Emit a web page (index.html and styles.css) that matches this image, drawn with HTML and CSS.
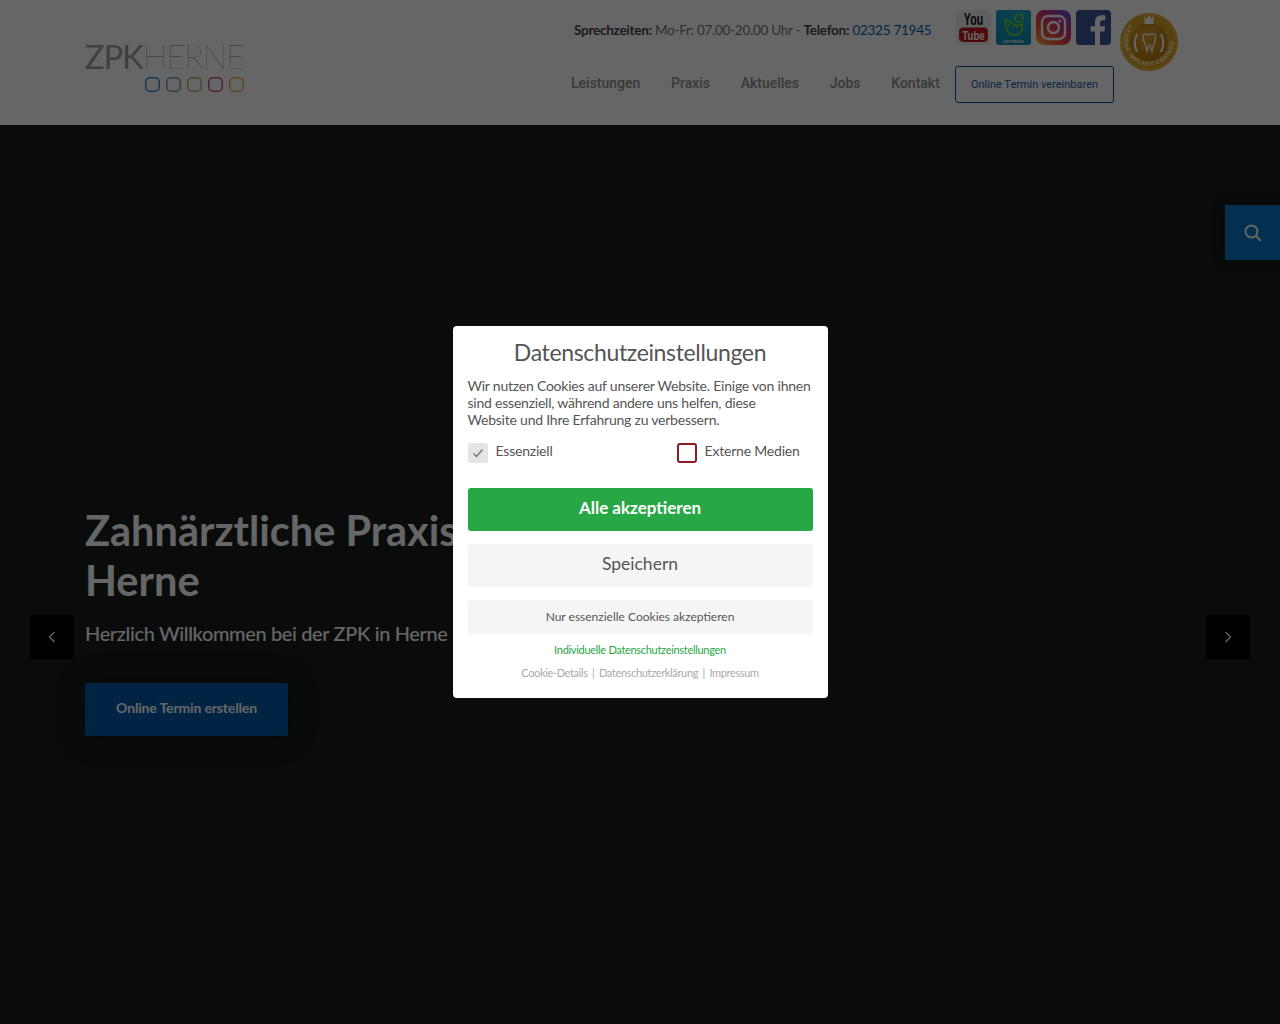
FILE: index.html
```html
<!DOCTYPE html>
<html lang="de">
<head>
<meta charset="utf-8">
<title>ZPK Herne</title>
<link rel="stylesheet" href="styles.css">
</head>
<body>
<header class="site-header">
  <a class="logo">
    <span class="logo-word"><span class="logo-zpk">ZPK</span><span class="logo-herne">HERNE</span></span>
    <span class="logo-dots">
      <i class="dot dot-blue"></i><i class="dot dot-slate"></i><i class="dot dot-olive"></i><i class="dot dot-plum"></i><i class="dot dot-amber"></i>
    </span>
  </a>
  <div class="header-main">
    <div class="header-top">
      <p class="hours"><b>Sprechzeiten:</b> Mo-Fr: 07.00-20.00 Uhr - <b>Telefon:</b> <a class="phone">02325 71945</a></p>
      <div class="socials">
        <svg class="icon" viewBox="0 0 34 34"><rect width="34" height="34" rx="5" fill="#f0f0f0"/><text transform="translate(17 15) scale(.65 1)" class="yt-you">You</text><rect x="3" y="17" width="28" height="14" rx="4" fill="#c4161c"/><text transform="translate(17 29) scale(.72 1)" class="yt-tube">Tube</text></svg>
        <svg class="icon" viewBox="0 0 35 35"><defs><linearGradient id="jam" x1="0" y1="0" x2="0" y2="1"><stop offset="0" stop-color="#17a5c4"/><stop offset="1" stop-color="#0f8bb0"/></linearGradient></defs><rect width="35" height="35" rx="3" fill="url(#jam)"/><path d="M9 10c1 9 2 15 9 15s9-5 8-11c-3 2-6 2-9 0-2-2-5-3-8-4z" fill="none" stroke="#7ed321" stroke-width="1.6"/><circle cx="23" cy="8" r="4" fill="none" stroke="#7ed321" stroke-width="1.6"/><circle cx="13" cy="15" r="1" fill="#7ed321"/><circle cx="21" cy="17" r="1" fill="#7ed321"/><text x="17.5" y="32.500" class="jam-text">jameda</text></svg>
        <svg class="icon" viewBox="0 0 35 35"><defs><linearGradient id="ig" x1="0.1" y1="1" x2="0.9" y2="0"><stop offset="0" stop-color="#f9a13a"/><stop offset=".35" stop-color="#e8483f"/><stop offset=".65" stop-color="#c7307f"/><stop offset="1" stop-color="#5a4fcf"/></linearGradient></defs><rect width="35" height="35" rx="8" fill="url(#ig)"/><rect x="6" y="6" width="23" height="23" rx="6" fill="none" stroke="#fff" stroke-width="2.400"/><circle cx="17.500" cy="17.500" r="5.500" fill="none" stroke="#fff" stroke-width="2.400"/><circle cx="24" cy="11" r="1.500" fill="#fff"/></svg>
        <svg class="icon" viewBox="0 0 35 35"><rect width="35" height="35" rx="4" fill="#3b5998"/><path d="M24 35V21.500h4.400l.7-5.300H24v-3.400c0-1.500.5-2.600 2.700-2.600h2.600V5.500c-.5-.1-2-.2-3.800-.2-3.900 0-6.500 2.300-6.500 6.700v4.200h-4.400v5.300H19V35z" fill="#fff"/></svg>
      </div>
    </div>
    <nav class="nav">
      <a class="nav-link">Leistungen</a>
      <a class="nav-link">Praxis</a>
      <a class="nav-link">Aktuelles</a>
      <a class="nav-link">Jobs</a>
      <a class="nav-link nav-link-last">Kontakt</a>
      <a class="nav-cta">Online Termin vereinbaren</a>
    </nav>
  </div>
  <svg class="seal" viewBox="0 0 58 58">
    <defs>
      <radialGradient id="gold" cx=".4" cy=".35" r=".8"><stop offset="0" stop-color="#dfa02c"/><stop offset="1" stop-color="#ad7210"/></radialGradient>
      <path id="ring" d="M9.500 12A25 25 0 1 0 48.500 12"/>
    </defs>
    <circle cx="29" cy="29" r="29" fill="#dda42c"/>
    <circle cx="29" cy="29" r="27.500" fill="none" stroke="#f0c060" stroke-width=".8"/>
    <circle cx="29" cy="29" r="19" fill="url(#gold)"/>
    <text class="seal-text"><textPath href="#ring">LEADING IMPLANT CENTERS</textPath></text>
    <path d="M24.500 3l2 3L29 2l2.500 4 2-3v8h-9z" fill="#fff"/>
    <path d="M17 21c-3 6-3 12 0 18M41 21c3 6 3 12 0 18" fill="none" stroke="#fff" stroke-width="2"/>
    <path d="M23 22c2-1.500 4-1 6 0 2-1 4-1.500 6 0 1 4 0 7-1.500 10l-1.500 6-2-6h-1l-2 6-1.500-6c-1.500-3-3-6-2.500-10z" fill="none" stroke="#fff" stroke-width="1.500" opacity=".9"/>
  </svg>
</header>

<main class="hero">
  <div class="hero-copy">
    <h1 class="hero-title">Zahnärztliche Praxis<br>Herne</h1>
    <p class="hero-sub">Herzlich Willkommen bei der ZPK in Herne</p>
    <a class="hero-btn">Online Termin erstellen</a>
  </div>
  <a class="arrow arrow-prev"><svg viewBox="0 0 10 14"><path d="M7.500 2L2.500 7l5 5" /></svg></a>
  <a class="arrow arrow-next"><svg viewBox="0 0 10 14"><path d="M2.500 2l5 5-5 5" /></svg></a>
  <a class="search-tab"><svg viewBox="0 0 20 20"><circle cx="8.500" cy="8.500" r="6"/><path d="M13 13l5 5"/></svg></a>
</main>

<div class="overlay">
  <section class="modal">
    <h2 class="modal-title">Datenschutzeinstellungen</h2>
    <p class="modal-text">Wir nutzen Cookies auf unserer Website. Einige von ihnen<br>sind essenziell, während andere uns helfen, diese<br>Website und Ihre Erfahrung zu verbessern.</p>
    <div class="choices">
      <label class="choice choice-first">
        <span class="box box-on"><svg viewBox="0 0 20 20"><path d="M5.500 10.500l3 3 6-7"/></svg></span>
        <span class="choice-label">Essenziell</span>
      </label>
      <label class="choice">
        <span class="box box-off"></span>
        <span class="choice-label">Externe Medien</span>
      </label>
    </div>
    <a class="btn btn-accept">Alle akzeptieren</a>
    <a class="btn btn-save">Speichern</a>
    <a class="btn btn-essential">Nur essenzielle Cookies akzeptieren</a>
    <a class="link-individual">Individuelle Datenschutzeinstellungen</a>
    <p class="modal-links"><a>Cookie-Details</a> | <a>Datenschutzerklärung</a> | <a>Impressum</a></p>
  </section>
</div>
</body>
</html>
```
FILE: styles.css
```css
* { box-sizing: border-box; }
html, body { margin: 0; height: 100%; }
body {
  height: 1024px;
  overflow: hidden;
  background: #191e1e;
  font-family: "Lato", "Liberation Sans", sans-serif;
  color: #333;
}
a { text-decoration: none; color: inherit; }
p, h1, h2 { margin: 0; }

/* header */
.site-header {
  height: 125px;
  background: #fff;
  display: flex;
  padding: 10px 102px 0 85px;
}
.logo { display: flex; flex-direction: column; align-items: flex-end; width: 159px; margin-top: 29px; }
.logo-word { font-family: "Lato", sans-serif; font-size: 33px; line-height: 34px; color: #a0a0a0; letter-spacing: -1.2px; white-space: nowrap; }
.logo-zpk { font-weight: 400; }
.logo-herne { font-weight: 100; color: #777; }
.logo-dots { display: flex; gap: 6px; margin-top: 4px; }
.dot { width: 15px; height: 15px; border-radius: 5px; box-shadow: inset 0 0 0 1.500px currentColor; display: block; }
.dot-blue { color: #3d8fd0; }
.dot-slate { color: #8097ad; }
.dot-olive { color: #b5b566; }
.dot-plum { color: #c4589a; }
.dot-amber { color: #e6b45c; }

.header-main { margin-left: auto; display: flex; flex-direction: column; width: 543px; }
.header-top { display: flex; justify-content: space-between; height: 55px; padding: 0 3px; }
.hours { font-size: 13.5px; line-height: 40px; color: #777; white-space: nowrap; letter-spacing: -0.26px; }
.hours b { color: #444; font-weight: 700; }
.phone { color: #0a5fa8; }
.socials { display: flex; gap: 5px; align-items: flex-start; }
.icon { width: 35px; height: 35px; display: block; flex: none; }
.yt-you, .yt-tube { font-family: "Liberation Sans", sans-serif; font-weight: 700; text-anchor: middle; }
.yt-you { font-size: 16px; fill: #111; }
.yt-tube { font-size: 13px; fill: #fff; }
.jam-text { font-family: "Noto Sans", sans-serif; font-size: 6px; fill: #fff; text-anchor: middle; }

.nav { display: flex; align-items: center; }
.nav-link { font-family: "Roboto", sans-serif; font-weight: 500; font-size: 14px; color: #909090; margin-right: 30.700px; line-height: 36px; padding-bottom: 2px; }
.nav-link-last { margin-right: 0; }
.nav-cta {
  font-family: "Roboto", sans-serif;
  font-size: 11px;
  color: #1a5fa8;
  border: 1px solid #0a4d99;
  border-radius: 3px;
  flex: none;
  width: 159px;
  height: 37px;
  margin-left: auto;
  display: flex;
  align-items: center;
  justify-content: center;
}
.seal { width: 58px; height: 58px; margin: 3px 0 0 6px; flex: none; display: block; }
.seal-text { font-family: "Liberation Sans", sans-serif; font-size: 5.500px; font-weight: 700; fill: #fff3cc; letter-spacing: .7px; }

/* hero */
.hero { position: relative; height: 899px; }
.hero-copy { padding: 380px 0 0 85px; }
.hero-title { font-size: 41.500px; line-height: 50px; font-weight: 700; color: #fff; }
.hero-sub { font-size: 20px; line-height: 30px; font-weight: 500; color: #fff; margin-top: 13px; letter-spacing: -0.37px; }
.hero-btn {
  display: flex;
  align-items: center;
  justify-content: center;
  width: 203px;
  height: 53px;
  margin-top: 35px;
  padding-bottom: 5px;
  background: #035aad;
  color: #fff;
  font-size: 14px;
  letter-spacing: -0.15px;
  font-weight: 700;
  border-radius: 3px;
  box-shadow: 0 0 30px rgba(0, 0, 0, .25);
}
.arrow {
  position: absolute;
  top: 490px;
  width: 44px;
  height: 44px;
  background: #000;
  border-radius: 3px;
  display: flex;
  align-items: center;
  justify-content: center;
}
.arrow svg { width: 10px; height: 14px; fill: none; stroke: #fff; stroke-width: 1.300; }
.arrow-prev { left: 30px; }
.arrow-next { right: 30px; }
.search-tab {
  position: absolute;
  top: 80px;
  right: 0;
  width: 55px;
  height: 55px;
  background: #0878c8;
  box-shadow: 0 0 12px rgba(0, 0, 0, .3);
  display: flex;
  align-items: center;
  justify-content: center;
}
.search-tab svg { width: 20px; height: 20px; fill: none; stroke: #fff; stroke-width: 2; }

/* consent */
.overlay {
  position: fixed;
  inset: 0;
  background: rgba(0, 0, 0, .6);
  display: flex;
  align-items: flex-start;
  justify-content: center;
  padding-top: 326px;
}
.modal {
  width: 375px;
  height: 372px;
  background: #fff;
  border-radius: 4px;
  padding: 11px 15px 0;
  display: flex;
  flex-direction: column;
  color: #555;
}
.modal-title { font-size: 23px; line-height: 30px; font-weight: 400; text-align: center; letter-spacing: -0.35px; }
.modal-text { font-size: 14px; line-height: 17px; margin-top: 10px; letter-spacing: -0.22px; white-space: nowrap; }
.choices { display: flex; margin-top: 15px; height: 20px; }
.choice { display: flex; align-items: center; gap: 8px; font-size: 14px; letter-spacing: -0.2px; flex: 1; }
.choice-first { flex: none; width: 209px; }
.choice-label { margin-top: -5px; }
.box { width: 20px; height: 20px; border-radius: 3px; display: block; flex: none; }
.box-on { background: #e5e5e5; }
.box-on svg { display: block; fill: none; stroke: #777; stroke-width: 1.500; }
.box-off { border: 2px solid #8c1a20; }
.btn { display: flex; align-items: center; justify-content: center; border-radius: 3px; flex: none; }
.btn-accept { height: 43px; margin-top: 25px; padding-bottom: 5px; background: #28a745; color: #fff; font-size: 17px; font-weight: 700; }
.btn-save { height: 43px; margin-top: 13px; padding-bottom: 5px; background: #f5f5f5; font-size: 17.500px; }
.btn-essential { height: 34px; margin-top: 13px; padding-bottom: 2px; background: #f5f5f5; font-size: 12px; }
.link-individual { margin-top: 8px; text-align: center; color: #28a745; font-size: 11px; line-height: 16px; letter-spacing: -0.3px; }
.modal-links { margin-top: 7px; text-align: center; color: #aaa; font-size: 11px; line-height: 16px; letter-spacing: -0.35px; word-spacing: 2px; }
```
